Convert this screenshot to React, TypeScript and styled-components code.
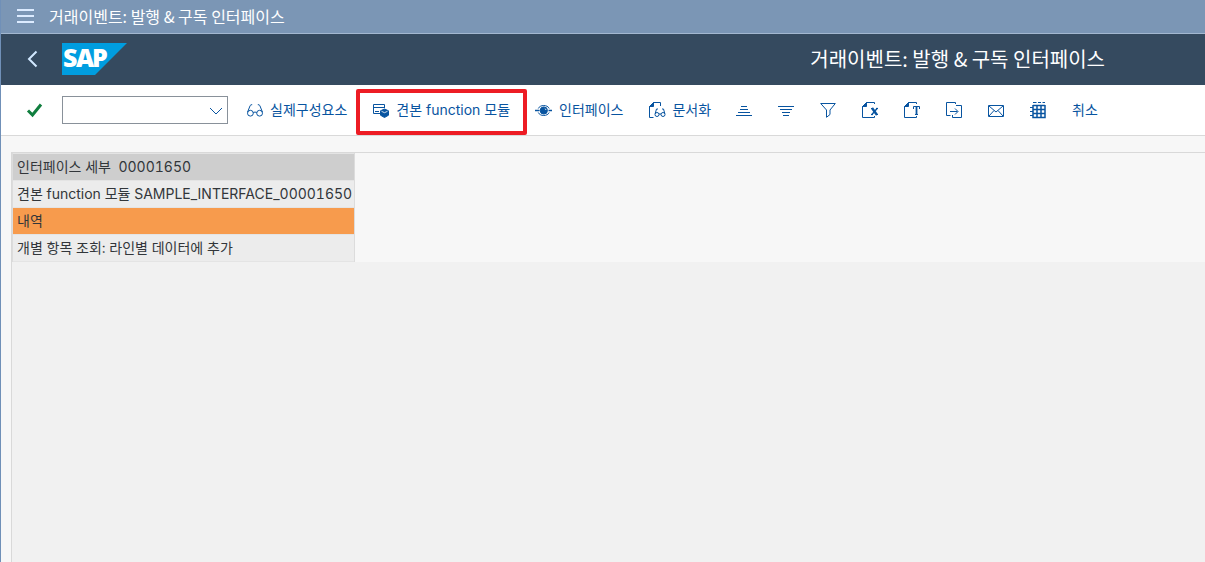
import React from 'react';
import styled, { createGlobalStyle, css } from 'styled-components';

const GlobalStyle = createGlobalStyle`
  * { box-sizing: border-box; }
  html, body, #root { height: 100%; }
  body {
    margin: 0;
    background: #f7f7f7;
    font-family: Inter, "Noto Sans CJK KR", sans-serif;
    font-size: 14px;
    line-height: 20px;
  }
`;

const Window = styled.div`
  display: flex;
  flex-direction: column;
  min-height: 100%;
  border-left: 1px solid #7090b8;
  overflow: hidden;
`;

const SystemBar = styled.header`
  display: flex;
  align-items: center;
  gap: 15px;
  height: 34px;
  padding: 0 0 2px 16px;
  background: #7b96b5;
  border-bottom: 1px solid #a3b8d0;
  color: #fff;
  font-size: 16px;
  font-family: "Noto Sans CJK KR", sans-serif;
`;

const ShellBar = styled.div`
  display: flex;
  align-items: center;
  height: 51px;
  padding: 0 100px 2px 23px;
  background: #354a5f;
  color: #fff;
`;

const PageTitle = styled.h1`
  margin: 0 0 0 auto;
  font: 400 20px/28px "Noto Sans CJK KR", sans-serif;
  white-space: nowrap;
`;

const IconButton = styled.button`
  display: flex;
  padding: 0;
  border: 0;
  background: none;
  color: inherit;
`;

const Logo = styled.svg`
  margin-left: 21px;
  overflow: visible;
`;

const Toolbar = styled.div`
  display: flex;
  align-items: center;
  height: 51px;
  padding-left: 25px;
  background: #fff;
  border-bottom: 1px solid #d9d9d9;
`;

const CommandField = styled.div`
  position: relative;
  width: 166px;
  height: 28px;
  margin: 0 6px 0 19px;
  flex: none;
`;

const CommandSelect = styled.select`
  appearance: none;
  width: 100%;
  height: 100%;
  border: 1px solid #89919a;
  border-radius: 0;
  background: #fff;
`;

const SelectArrow = styled.svg`
  position: absolute;
  top: 11px;
  right: 5px;
  pointer-events: none;
`;

const ToolButton = styled.button<{ $marked?: boolean; $labelled?: boolean }>`
  position: relative;
  display: flex;
  align-items: center;
  gap: 6px;
  flex: none;
  height: 38px;
  padding: 0 ${({ $labelled }) => ($labelled ? 13 : 12)}px 0 12px;
  border: 0;
  background: none;
  color: #0854a0;
  font: inherit;
  white-space: nowrap;
  ${({ $marked }) =>
    $marked &&
    css`
      &::after {
        content: '';
        position: absolute;
        inset: -2px -4px -6px;
        border: 4px solid #ed1c24;
        border-radius: 2px;
      }
    `}
`;

const Icon = styled.svg`
  display: block;
  flex: none;
  fill: none;
  stroke: currentColor;
`;

const Content = styled.main`
  display: flex;
  flex-direction: column;
  flex: 1;
  padding: 16px 0 0 10px;
`;

const Canvas = styled.section`
  flex: 1;
  border-top: 1px solid #d9d9d9;
  border-left: 1px solid #d9d9d9;
  background: #f1f1f1;
`;

const ListArea = styled.div`
  background: #f7f7f7;
`;

const DetailTable = styled.table`
  border-collapse: separate;
  border-spacing: 0 1px;
  border: solid #dcdcdc;
  border-width: 0 1px;
  background: #e4e4e4;
  color: #32363a;
  font-variant-numeric: tabular-nums;
`;

const tones = { head: '#cecece', plain: '#ececec', accent: '#f79b4d' };

const Cell = styled.td<{ $tone: keyof typeof tones }>`
  height: 26px;
  padding: 0 2px 0 4px;
  background: ${({ $tone }) => tones[$tone]};
  font-weight: 400;
  text-align: left;
  white-space: pre;
`;

const page = (
  <>
    <path d="M12.5 3V1.5h-8L.5 5.5v11h12V15" />
    <path d="M4.5 1.5v4h-4z" fill="currentColor" />
  </>
);

const icons: Record<string, React.ReactNode> = {
  glasses: (
    <>
      <circle cx="4.4" cy="12.2" r="2.9" />
      <circle cx="13.6" cy="12.2" r="2.9" />
      <path d="M7.3 11.6q1.7-1.2 3.4 0M1.6 11 4.2 4.5q.5-1 2-.8M16.4 11l-2.6-6.5q-.5-1-2-.8" />
    </>
  ),
  module: (
    <>
      <path d="M8 12.5H1.5v-9h11V7M1.5 6.5h11M3 10.5h4" />
      <path d="m12.500 8 4 1.800v4.400l-4 2.300-4-2.300V9.800z" fill="currentColor" />
      <path d="m9.500 10.300 3 1.400 3-1.400" stroke="#fff" strokeWidth=".8" />
    </>
  ),
  bullseye: (
    <>
      <path d="M0 9.5h4.500M13.500 9.500H17" strokeWidth="1.4" />
      <path d="M3.300 7.500C5 3.500 12.500 3.500 14.200 7.500M3.300 11.500c1.700 4 9.200 4 10.900 0" />
      <circle cx="8.800" cy="9.500" r="3.600" fill="currentColor" />
      <path d="M9.800 7.500q1 .5 1.200 1.500" stroke="#fff" strokeWidth=".8" />
    </>
  ),
  pageGlasses: (
    <>
      <path d="M12.5 5V1.5h-7L1.5 5.500v11h4" />
      <path d="M5.500 1.500v4h-4z" fill="currentColor" />
      <circle cx="9" cy="13.500" r="2" />
      <circle cx="15" cy="13.500" r="2" />
      <path d="M11 13h2M7.200 12.500 8.500 8h1.500M16.800 12.500 15.500 8H14" />
    </>
  ),
  ascending: <path d="M5 5.500h6M4 8.500h8M2 11.500h12M0 14.500h16" />,
  descending: <path d="M0 5.500h16M2 8.500h12M4 11.500h8M5 14.500h6" />,
  filter: <path d="M.7 2.500h14.600L10 9v4.500l-3.500 2.800V9z" />,
  pageX: (
    <>
      {page}
      <path d="M7 5.500h11v9H7z" fill="#fff" stroke="none" />
      <path d="m10 7 5 7" strokeWidth="2.400" />
      <path d="m15.500 7-6 7" strokeWidth="1.400" />
      <path d="M9 7.500h2M14 7.500h2M9 13.500h2M14 13.500h2" />
    </>
  ),
  pageT: (
    <>
      {page}
      <path d="M7 4h11v10H7z" fill="#fff" stroke="none" />
      <path d="M9.500 8V5.500h6V8M11 13.500h3" />
      <path d="M12.500 5.500v8" strokeWidth="1.800" />
    </>
  ),
  exportPage: (
    <>
      <path d="M9.500 3V1.500h-9v13h4M10 4.500h5.500v12h-9V14M4 10.500h7.500" />
      <path d="m9 7.500 3 3-3 3" />
    </>
  ),
  mail: (
    <>
      <path d="M.5 4.500h15v11H.5z" />
      <path d="m1 5 7 6 7-6M1 15l5-5.500M15 15l-5-5.500" />
    </>
  ),
  grid: (
    <>
      <path
        d="M3 4v12.500h12V4M3 4.500h12M3 8.500h12M3 12.500h12M7 4v12M11 4v12"
        strokeWidth="1.500"
      />
      <path d="M0 6.500h3M0 10.500h3M0 14.500h3M3 1.500h3.500M8 1.500h3M12.500 1.500h2.500" />
    </>
  ),
};

const tools: { icon?: string; label?: string; title?: string; marked?: boolean }[] = [
  { icon: 'glasses', label: '실제구성요소' },
  { icon: 'module', label: '견본 function 모듈', marked: true },
  { icon: 'bullseye', label: '인터페이스' },
  { icon: 'pageGlasses', label: '문서화' },
  { icon: 'ascending', title: '오름차순' },
  { icon: 'descending', title: '내림차순' },
  { icon: 'filter', title: '필터' },
  { icon: 'pageX', title: '스프레드시트' },
  { icon: 'pageT', title: '텍스트 파일' },
  { icon: 'exportPage', title: '내보내기' },
  { icon: 'mail', title: '메일' },
  { icon: 'grid', title: '레이아웃' },
  { label: '취소' },
];

const rows: { text: string; tone: keyof typeof tones }[] = [
  { text: '견본 function 모듈 SAMPLE_INTERFACE_00001650', tone: 'plain' },
  { text: '내역', tone: 'accent' },
  { text: '개별 항목 조회: 라인별 데이터에 추가', tone: 'plain' },
];

export default function App() {
  return (
    <Window>
      <GlobalStyle />
      <SystemBar>
        <IconButton aria-label="메뉴">
          <Icon width="17" height="14" viewBox="0 0 17 14">
            <path d="M0 1h17M0 7h17M0 13h17" stroke="#dcebff" strokeWidth="2" />
          </Icon>
        </IconButton>
        <span>거래이벤트: 발행 &amp; 구독 인터페이스</span>
      </SystemBar>
      <ShellBar>
        <IconButton aria-label="뒤로">
          <Icon width="17" height="18" viewBox="0 0 17 18">
            <path d="M12.500 1.500 5 9l7.500 7.500" stroke="#d1e8ff" strokeWidth="2" />
          </Icon>
        </IconButton>
        <Logo width="65" height="32" viewBox="0 0 65 32" role="img" aria-label="SAP">
          <path d="M0 0h65L33 32H0z" fill="#009de0" />
          <text y="24" x="1 14 30" fill="#fff" fontFamily="Open Sans" fontWeight="800" fontSize="25">
            SAP
          </text>
        </Logo>
        <PageTitle>거래이벤트: 발행 &amp; 구독 인터페이스</PageTitle>
      </ShellBar>
      <Toolbar>
        <IconButton aria-label="실행">
          <Icon width="17" height="18" viewBox="0 0 17 18">
            <path d="m2 9.500 4.500 4.500L15 3.500" stroke="#107e3e" strokeWidth="3" />
          </Icon>
        </IconButton>
        <CommandField>
          <CommandSelect aria-label="명령">
            <option></option>
          </CommandSelect>
          <SelectArrow width="14" height="8" viewBox="0 0 14 8" fill="none" stroke="#0854a0">
            <path d="m1 1 6 6 6-6" />
          </SelectArrow>
        </CommandField>
        {tools.map((tool) => (
          <ToolButton
            key={tool.icon ?? tool.label}
            $marked={tool.marked}
            $labelled={Boolean(tool.label)}
            aria-label={tool.title}
          >
            {tool.icon && (
              <Icon width="18" height="18" viewBox="0 0 18 18">
                {icons[tool.icon]}
              </Icon>
            )}
            {tool.label}
          </ToolButton>
        ))}
      </Toolbar>
      <Content>
        <Canvas>
          <ListArea>
            <DetailTable>
              <thead>
                <tr>
                  <Cell as="th" scope="col" $tone="head">{'인터페이스 세부  00001650'}</Cell>
                </tr>
              </thead>
              <tbody>
                {rows.map((row) => (
                  <tr key={row.text}>
                    <Cell $tone={row.tone}>{row.text}</Cell>
                  </tr>
                ))}
              </tbody>
            </DetailTable>
          </ListArea>
        </Canvas>
      </Content>
    </Window>
  );
}
